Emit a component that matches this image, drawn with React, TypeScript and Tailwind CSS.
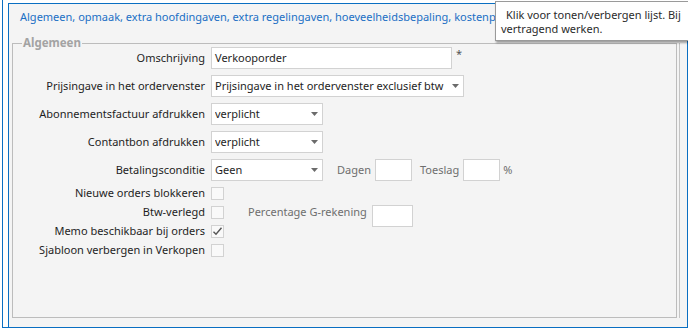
import React from "react";

const font = { fontFamily: '"Noto Sans", "Open Sans", sans-serif' };

function Arrow() {
  return (
    <svg width="7" height="4" viewBox="0 0 7 4" className="shrink-0">
      <path d="M0 0 L7 0 L3.5 4 Z" fill="#6b6b6b" />
    </svg>
  );
}

function Select({ value, width }: { value: string; width: string }) {
  return (
    <div
      className={`h-[22px] ${width} bg-white border border-[#d2d2d2] flex items-center pl-[3px] pr-[4px] text-[11px] text-[#1e1e1e]`}
    >
      <span className="flex-1 whitespace-nowrap overflow-hidden">{value}</span>
      <Arrow />
    </div>
  );
}

function Box({ className = "" }: { className?: string }) {
  return <div className={`h-[22px] bg-white border border-[#d2d2d2] ${className}`} />;
}

function Check({ checked = false }: { checked?: boolean }) {
  return (
    <div className="w-[13px] h-[13px] bg-[#f9f9f9] border border-[#d2d2d2] flex items-center justify-center">
      {checked && (
        <svg width="11" height="11" viewBox="0 0 11 11">
          <path d="M1.5 5.8 L4 8.3 L9.5 1.8" fill="none" stroke="#555" strokeWidth="1.4" />
        </svg>
      )}
    </div>
  );
}

function Row({ label, children }: { label: string; children: React.ReactNode }) {
  return (
    <div className="h-[28px] flex items-center">
      <div className="w-[192px] text-right text-[11px] text-[#1e1e1e] whitespace-nowrap">{label}</div>
      <div className="ml-[6px] flex items-center">{children}</div>
    </div>
  );
}

function CRow({ label, children }: { label: string; children: React.ReactNode }) {
  return (
    <div className="h-[19px] flex items-center">
      <div className="w-[192px] text-right text-[11px] text-[#1e1e1e] whitespace-nowrap">{label}</div>
      <div className="ml-[6px] flex items-center">{children}</div>
    </div>
  );
}

export default function App() {
  return (
    <div className="w-[688px] h-[328px] bg-white pl-[2px] overflow-hidden relative" style={font}>
      <div className="h-full border-l border-b border-[#0a6fc2] pl-[5px] pt-[3px] flex">
        <div className="flex-1 border-l border-t border-r border-[#0a6fc2] bg-[#f4f4f4] flex flex-col">
          <div className="h-[39px] w-[486px] pl-[11px] pt-[5px] text-[11px] leading-[16px] text-[#1a6fc4] whitespace-nowrap overflow-hidden">
            Algemeen, opmaak, extra hoofdingaven, extra regelingaven, hoeveelheidsbepaling, kostenplaatsen, artikelen
          </div>
          <div className="flex pl-[3px] h-[275px]">
            <div className="w-[665px] h-full border border-[#bcbcbc] relative">
              <span className="absolute left-[9px] top-[-9px] px-[1px] bg-[#f4f4f4] text-[11.5px] leading-[16px] font-bold text-[#a3a3a3]">
                Algemeen
              </span>
              <Row label="Omschrijving">
                <div className="h-[22px] w-[241px] bg-white border border-[#d2d2d2] flex items-center pl-[3px] text-[11px] text-[#1e1e1e]">
                  Verkooporder
                </div>
                <span className="ml-[4px] text-[11px] text-[#555] self-start -mt-[1px]">*</span>
              </Row>
              <Row label="Prijsingave in het ordervenster">
                <Select value="Prijsingave in het ordervenster exclusief btw" width="w-[253px]" />
              </Row>
              <Row label="Abonnementsfactuur afdrukken">
                <Select value="verplicht" width="w-[112px]" />
              </Row>
              <Row label="Contantbon afdrukken">
                <Select value="verplicht" width="w-[112px]" />
              </Row>
              <Row label="Betalingsconditie">
                <Select value="Geen" width="w-[112px]" />
                <span className="ml-[14px] text-[11px] text-[#6e6e6e]">Dagen</span>
                <Box className="ml-[4px] w-[37px]" />
                <span className="ml-[8px] text-[11px] text-[#6e6e6e]">Toeslag</span>
                <Box className="ml-[4px] w-[37px]" />
                <span className="ml-[3px] text-[11px] text-[#6e6e6e]">%</span>
              </Row>
              <CRow label="Nieuwe orders blokkeren">
                <Check />
              </CRow>
              <CRow label="Btw-verlegd">
                <Check />
                <span className="ml-[24px] text-[11px] text-[#6e6e6e] whitespace-nowrap">Percentage G-rekening</span>
                <Box className="ml-[5px] w-[41px] mt-[6px]" />
              </CRow>
              <CRow label="Memo beschikbaar bij orders">
                <Check checked />
              </CRow>
              <CRow label="Sjabloon verbergen in Verkopen">
                <Check />
              </CRow>
            </div>
            <div className="ml-[2px] w-px h-full bg-[#c4c4c4]" />
          </div>
        </div>
      </div>
      <div className="absolute left-[495px] top-[1px] w-[200px] h-[40px] bg-white border border-[#9a9a9a] shadow-[1px_2px_2px_rgba(0,0,0,0.35)] pl-[5px] pt-[6px] text-[11px] leading-[14px] text-[#2b2b2b] whitespace-nowrap">
        <div className="pl-[5px]">Klik voor tonen/verbergen lijst. Bij</div>
        <div>vertragend werken.</div>
      </div>
    </div>
  );
}
